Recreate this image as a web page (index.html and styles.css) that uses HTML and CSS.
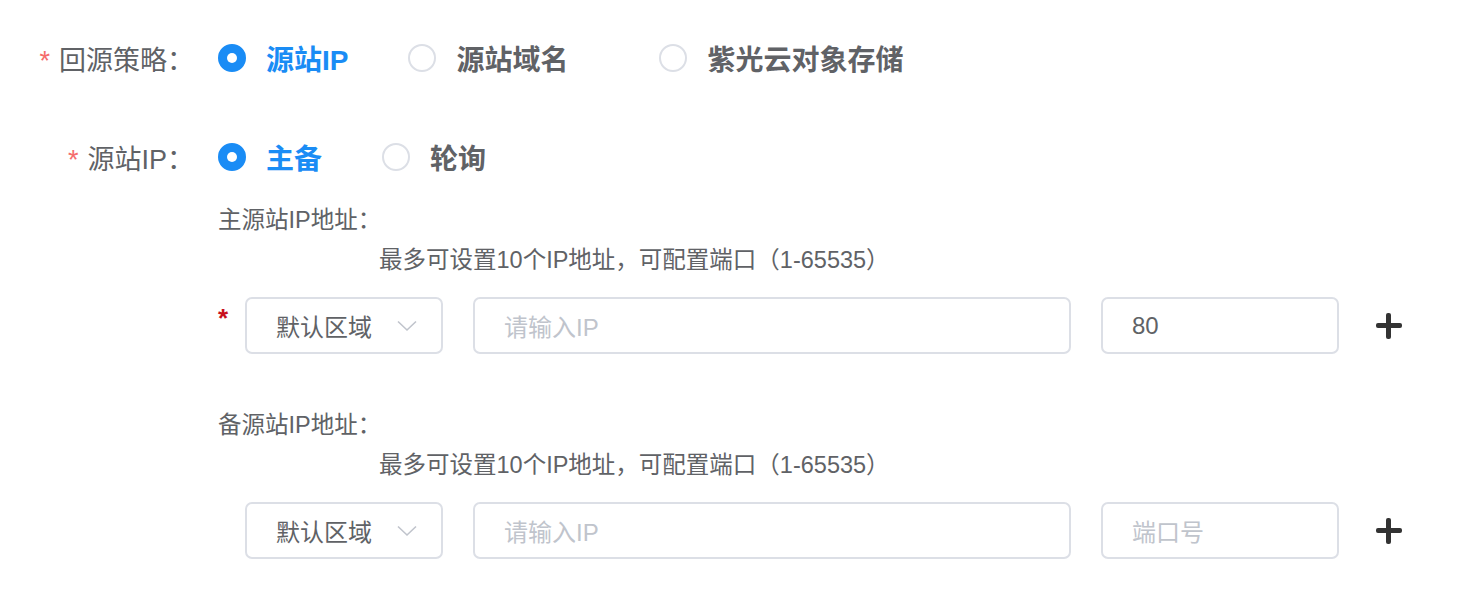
FILE: index.html
```html
<!DOCTYPE html>
<html lang="zh-CN">
<head>
    <meta charset="UTF-8">
    <meta name="viewport" content="width=device-width, initial-scale=1.0">
    <title>回源配置</title>
    <link rel="stylesheet" href="styles.css">
</head>
<body>
    <div class="form">
        <div class="form-item">
            <label class="form-label"><span class="star">*</span>回源策略：</label>
            <div class="radio-group">
                <label class="radio checked"><span class="radio-dot"></span><span class="radio-text">源站IP</span></label>
                <label class="radio radio-wide"><span class="radio-dot"></span><span class="radio-text">源站域名</span></label>
                <label class="radio"><span class="radio-dot"></span><span class="radio-text">紫光云对象存储</span></label>
            </div>
        </div>

        <div class="form-item item-ip">
            <label class="form-label"><span class="star">*</span>源站IP：</label>
            <div class="radio-group">
                <label class="radio checked"><span class="radio-dot"></span><span class="radio-text">主备</span></label>
                <label class="radio"><span class="radio-dot"></span><span class="radio-text">轮询</span></label>
            </div>
        </div>

        <div class="origin-block">
            <div class="origin-title">主源站IP地址：</div>
            <div class="origin-hint">最多可设置10个IP地址，可配置端口（1-65535）</div>
            <div class="origin-row">
                <span class="row-star">*</span>
                <div class="select">
                    <span>默认区域</span>
                    <svg class="chevron" width="20" height="12" viewBox="0 0 20 12"><path d="M1 1.5 L10 10 L19 1.5" fill="none" stroke="#c0c4cc" stroke-width="1.6"/></svg>
                </div>
                <div class="input input-ip placeholder">请输入IP</div>
                <div class="input input-port">80</div>
                <span class="plus"></span>
            </div>
        </div>

        <div class="origin-block block-backup">
            <div class="origin-title">备源站IP地址：</div>
            <div class="origin-hint">最多可设置10个IP地址，可配置端口（1-65535）</div>
            <div class="origin-row">
                <span class="row-star"></span>
                <div class="select">
                    <span>默认区域</span>
                    <svg class="chevron" width="20" height="12" viewBox="0 0 20 12"><path d="M1 1.5 L10 10 L19 1.5" fill="none" stroke="#c0c4cc" stroke-width="1.6"/></svg>
                </div>
                <div class="input input-ip placeholder">请输入IP</div>
                <div class="input input-port placeholder">端口号</div>
                <span class="plus"></span>
            </div>
        </div>
    </div>
</body>
</html>
```

FILE: styles.css
```css
* {
    box-sizing: border-box;
}
body {
    margin: 0;
    background: #fff;
    font-family: "Helvetica Neue", "Liberation Sans", "Noto Sans CJK SC", sans-serif;
    color: #606266;
}
.form {
    padding-top: 30px;
}
.form-item {
    display: flex;
    align-items: center;
    height: 56px;
}
.item-ip {
    margin-top: 43px;
}
.form-label {
    width: 194px;
    text-align: right;
    font-size: 27px;
    color: #606266;
    margin-right: 24px;
}
.star {
    color: #f56c6c;
    font-size: 27px;
    margin-right: 9px;
}
.radio-group {
    display: flex;
    align-items: center;
}
.radio {
    display: flex;
    align-items: center;
    margin-right: 60px;
}
.radio-wide {
    margin-right: 91px;
}
.radio-dot {
    width: 28px;
    height: 28px;
    border-radius: 50%;
    border: 2px solid #dcdfe6;
    margin-right: 20px;
    position: relative;
}
.radio.checked .radio-dot {
    background: #1a8cf5;
    border-color: #1a8cf5;
}
.radio.checked .radio-dot::after {
    content: "";
    position: absolute;
    left: 50%;
    top: 50%;
    width: 10px;
    height: 10px;
    margin: -5px 0 0 -5px;
    border-radius: 50%;
    background: #fff;
}
.radio-text {
    font-size: 28px;
    font-weight: 600;
    color: #606266;
}
.radio.checked .radio-text {
    color: #1a8cf5;
}
.origin-block {
    padding-left: 218px;
    margin-top: 20px;
}
.block-backup {
    margin-top: 56px;
}
.origin-title {
    font-size: 23.5px;
    line-height: 30px;
}
.origin-hint {
    font-size: 23.5px;
    line-height: 30px;
    margin-top: 10px;
    padding-left: 161px;
}
.origin-row {
    display: flex;
    align-items: center;
    margin-top: 22px;
}
.row-star {
    width: 27px;
    color: #c8101e;
    font-size: 26px;
    font-weight: bold;
    align-self: flex-start;
    padding-top: 6px;
}
.select,
.input {
    height: 57px;
    border: 2px solid #dcdfe6;
    border-radius: 7px;
    font-size: 24px;
    color: #606266;
    display: flex;
    align-items: center;
    padding-left: 29px;
}
.select {
    width: 198px;
    justify-content: space-between;
    padding-right: 24px;
}
.input-ip {
    width: 598px;
    margin-left: 30px;
}
.input-port {
    width: 238px;
    margin-left: 30px;
}
.placeholder {
    color: #c0c4cc;
}
.plus {
    width: 26px;
    height: 26px;
    margin-left: 37px;
    position: relative;
}
.plus::before,
.plus::after {
    content: "";
    position: absolute;
    background: #333;
    border-radius: 2px;
}
.plus::before {
    left: 0;
    right: 0;
    top: 10px;
    height: 5px;
}
.plus::after {
    top: 0;
    bottom: 0;
    left: 10px;
    width: 5px;
}
```
